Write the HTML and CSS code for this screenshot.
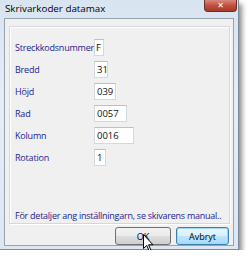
FILE: index.html
```html
<!DOCTYPE html>
<html lang="sv">
<head>
    <meta charset="UTF-8">
    <title>Skrivarkoder datamax</title>
    <link rel="stylesheet" href="styles.css">
</head>
<body>
    <div class="window">
        <div class="titlebar">
            <span class="title">Skrivarkoder datamax</span>
            <span class="close">&#x2715;</span>
        </div>
        <div class="client">
            <div class="group">
                <div class="row">
                    <label>Streckkodsnummer</label>
                    <input type="text" class="w-f" value="F">
                </div>
                <div class="row">
                    <label>Bredd</label>
                    <input type="text" class="w-2" value="31">
                </div>
                <div class="row">
                    <label>Höjd</label>
                    <input type="text" class="w-3" value="039">
                </div>
                <div class="row">
                    <label>Rad</label>
                    <input type="text" class="w-4" value="0057">
                </div>
                <div class="row">
                    <label>Kolumn</label>
                    <input type="text" class="w-5" value="0016">
                </div>
                <div class="row">
                    <label>Rotation</label>
                    <input type="text" class="w-1" value="1">
                </div>
                <div class="note">För detaljer ang inställningarn, se skivarens manual..</div>
            </div>
            <div class="buttons">
                <button class="btn">OK</button>
                <button class="btn default">Avbryt</button>
            </div>
        </div>
        <!-- muspekaren ovanför OK -->
        <svg class="cursor" width="11" height="18" viewBox="0 0 11 18">
            <path d="M0.5 0.5 L0.5 14.5 L3.8 11.4 L6 16.8 L7.8 16 L5.6 10.8 L10 10.8 Z" fill="#fff" stroke="#000" stroke-width="1"/>
        </svg>
    </div>
</body>
</html>
```

FILE: styles.css
```css
body {
    margin: 0;
    background-color: #fff;
    font-family: "Open Sans", sans-serif;
}

.window {
    position: relative;
    width: 239px;
    height: 250px;
    padding: 0 4px 4px 4px;
    box-sizing: border-box;
    background: linear-gradient(#d9e4f1, #e6edf6 40%, #dde7f2);
    border-right: 1px solid #7d8a99;
    border-bottom: 1px solid #7d8a99;
    box-shadow: 3px 4px 5px rgba(0, 0, 0, 0.45);
    display: flex;
    flex-direction: column;
}

.titlebar {
    height: 18px;
    display: flex;
    align-items: flex-start;
    flex-shrink: 0;
}

.title {
    font-size: 9.8px;
    color: #000;
    line-height: 18px;
    margin-left: 1px;
}

.close {
    margin-left: auto;
    margin-right: -3px;
    width: 33px;
    height: 12px;
    background: linear-gradient(#d88a7c, #c0503f 50%, #a83a2c);
    border: 1px solid #6e2d26;
    border-top: none;
    border-radius: 0 0 4px 4px;
    color: #fff;
    font-family: "DejaVu Sans", sans-serif;
    font-size: 8px;
    font-weight: bold;
    line-height: 11px;
    text-align: center;
    box-sizing: border-box;
}

.client {
    flex: 1;
    background-color: #f0f0f0;
    border: 1px solid #97a3b2;
    display: flex;
    flex-direction: column;
    padding: 7px 3px 0 4px;
}

.group {
    height: 198px;
    flex-shrink: 0;
    box-sizing: border-box;
    border: 1px solid #d2d8de;
    box-shadow: inset 1px 1px 0 #fff, 1px 1px 0 #fff;
    padding: 9px 5px 0 5px;
    display: flex;
    flex-direction: column;
}

.row {
    height: 22px;
    display: flex;
    align-items: center;
}

.row label {
    width: 79px;
    font-size: 9px;
    letter-spacing: -0.2px;
    color: #23238e;
    white-space: nowrap;
}

.row input {
    height: 17px;
    box-sizing: border-box;
    border: 1px solid #d3d8de;
    border-top-color: #b9c0c8;
    background-color: #fff;
    font-family: "Open Sans", sans-serif;
    font-size: 9.5px;
    color: #111;
    padding: 0 0 0 2px;
    margin: 0;
}

.w-f { width: 10px; padding-left: 1px !important; }
.w-1 { width: 12px; }
.w-2 { width: 14px; }
.w-3 { width: 22px; }
.w-4 { width: 33px; }
.w-5 { width: 40px; }

.note {
    margin-top: auto;
    margin-bottom: 1px;
    font-size: 9px;
    letter-spacing: -0.25px;
    color: #23238e;
    white-space: nowrap;
}

.buttons {
    display: flex;
    justify-content: flex-end;
    gap: 5px;
    margin-top: 3px;
    padding-right: 1px;
}

.btn {
    height: 18px;
    padding: 0;
    border: 1px solid #707070;
    border-radius: 3px;
    background: linear-gradient(#f2f2f2, #ebebeb 50%, #dddddd 51%, #cfcfcf);
    font-family: "Open Sans", sans-serif;
    font-size: 9px;
    color: #000;
    width: 56px;
}

.btn.default {
    width: 53px;
    border-color: #3c7fb1;
    box-shadow: inset 0 0 0 1px #a3d6f5;
    background: linear-gradient(#eaf6fd, #d9f0fc 50%, #bee6fd 51%, #a7d9f5);
}

.cursor {
    position: absolute;
    left: 143px;
    top: 234px;
}
```
